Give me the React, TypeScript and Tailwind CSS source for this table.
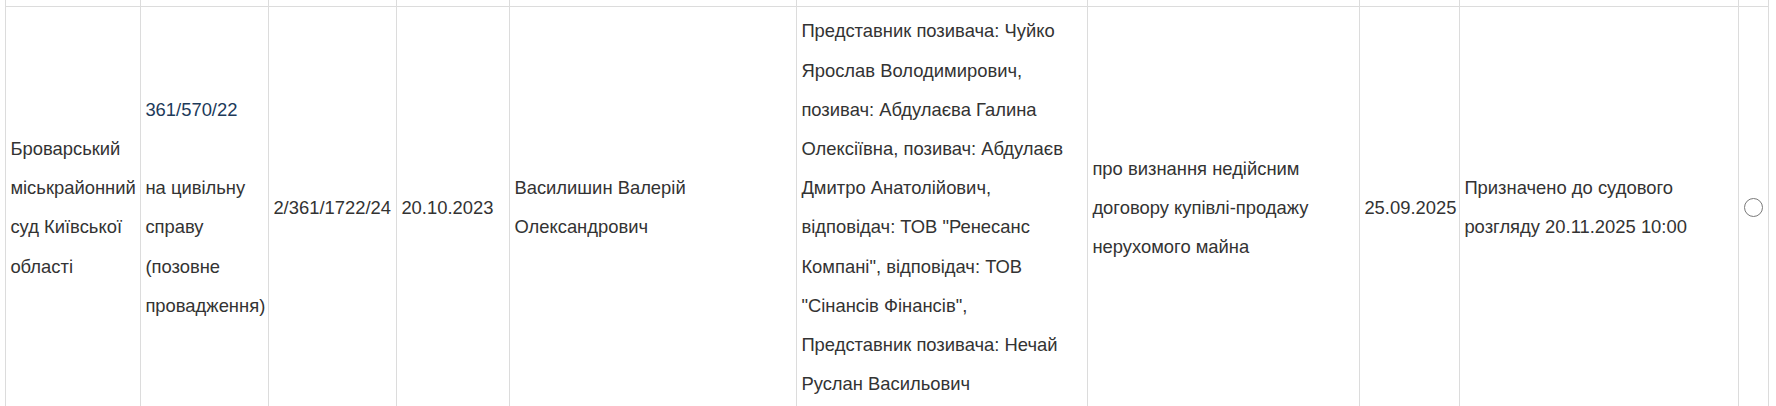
const cols = "grid-cols-[135px_128px_128px_113px_287px_291px_272px_100px_279px_30px]";

const cell = "border-r border-b border-[#dcdcdc] px-[4.4px] py-[4.4px] flex items-center whitespace-nowrap";

const Lines = ({ lines }: { lines: string[] }) => (
  <div>
    {lines.map((l, i) => (
      <div key={i}>{l}</div>
    ))}
  </div>
);

const parties = [
  "Представник позивача: Чуйко",
  "Ярослав Володимирович,",
  "позивач: Абдулаєва Галина",
  "Олексіївна, позивач: Абдулаєв",
  "Дмитро Анатолійович,",
  "відповідач: ТОВ \"Ренесанс",
  "Компані\", відповідач: ТОВ",
  "\"Сінансів Фінансів\",",
  "Представник позивача: Нечай",
  "Руслан Васильович",
];

const CaseRow = () => {
  return (
    <>
      <div className={cell}>
        <Lines lines={["Броварський", "міськрайонний", "суд Київської", "області"]} />
      </div>
      <div className={cell}>
        <div>
          <a href="#" className="text-[#1c3a5a]">361/570/22</a>
          <div className="h-[39.2px]"></div>
          <Lines lines={["на цивільну", "справу", "(позовне", "провадження)"]} />
        </div>
      </div>
      <div className={cell}>
        <div>2/361/1722/24</div>
      </div>
      <div className={cell}>
        <div>20.10.2023</div>
      </div>
      <div className={cell}>
        <Lines lines={["Василишин Валерій", "Олександрович"]} />
      </div>
      <div className={cell}>
        <Lines lines={parties} />
      </div>
      <div className={cell}>
        <Lines lines={["про визнання недійсним", "договору купівлі-продажу", "нерухомого майна"]} />
      </div>
      <div className={cell}>
        <div>25.09.2025</div>
      </div>
      <div className={cell}>
        <Lines lines={["Призначено до судового", "розгляду 20.11.2025 10:00"]} />
      </div>
      <div className="border-r border-b border-[#dcdcdc] flex items-center justify-center">
        <div className="w-[19px] h-[19px] rounded-full border border-[#7a7a7a] bg-white"></div>
      </div>
    </>
  );
};

export default function App() {
  return (
    <div className="bg-white w-[1776px] h-[406px] overflow-hidden">
      <div
        className={`ml-[5px] w-[1764px] grid ${cols} border-l border-[#dcdcdc] text-[18.4px] leading-[39.2px] text-[#333]`}
        style={{ fontFamily: '"Liberation Sans", Arial, sans-serif' }}
      >
        {/* previous row, mostly scrolled off */}
        {Array.from({ length: 10 }).map((_, i) => (
          <div key={i} className="h-[7px] border-r border-b border-[#dcdcdc]"></div>
        ))}
        <CaseRow />
      </div>
    </div>
  );
}
